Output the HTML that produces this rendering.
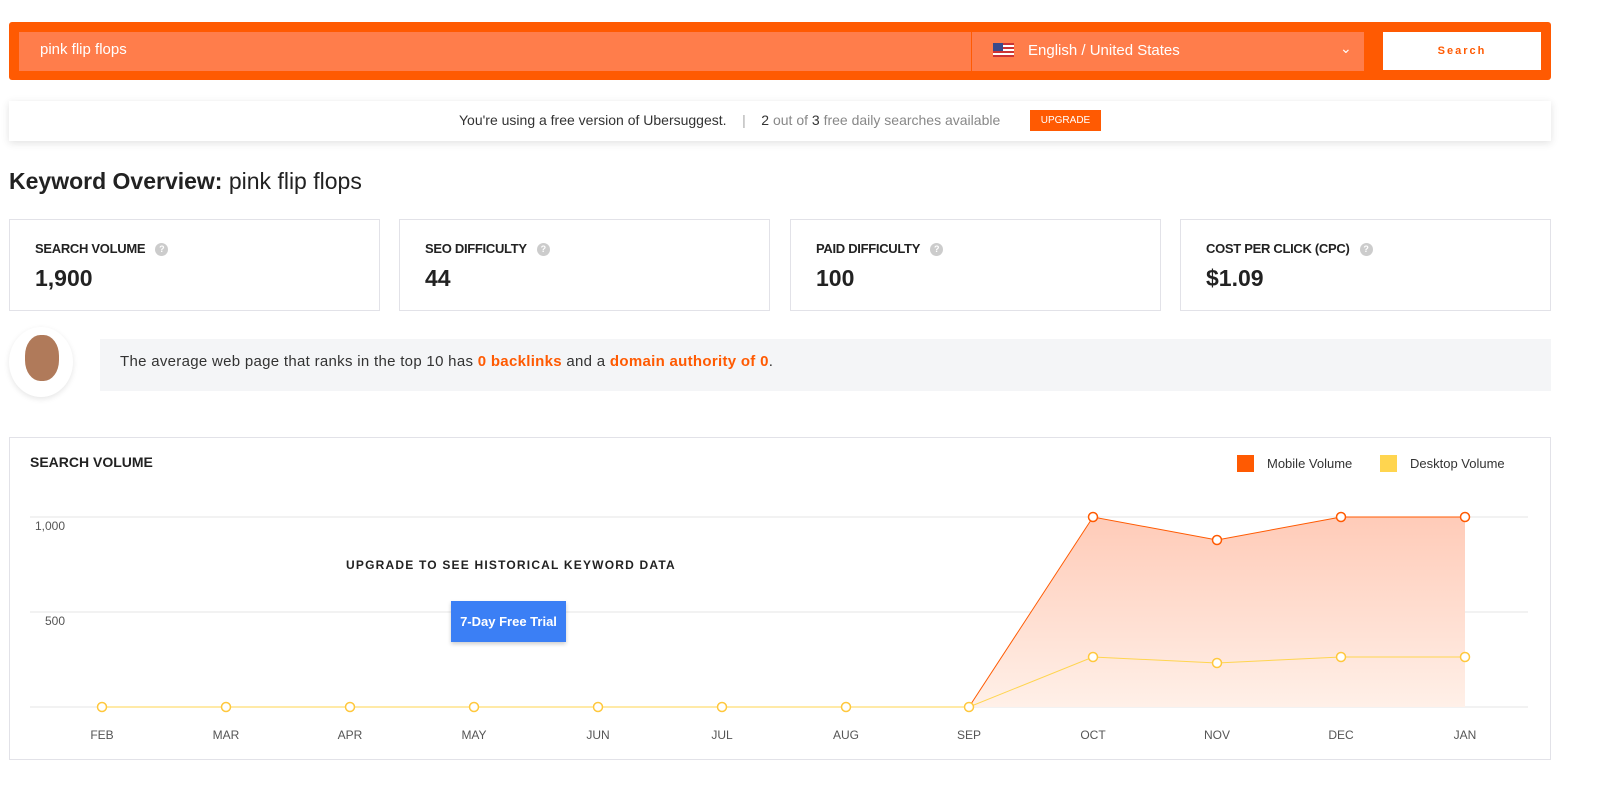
<!DOCTYPE html>
<html><head><meta charset="utf-8"><style>
*{box-sizing:border-box;margin:0;padding:0}
body{width:1598px;height:789px;background:#fff;font-family:"Liberation Sans",sans-serif;color:#222;position:relative;overflow:hidden}
.abs{position:absolute}
.card{position:absolute;top:219px;width:371px;height:92px;border:1px solid #e2e2e8;background:#fff}
.card .l{position:absolute;left:25px;top:21px;font-size:13px;font-weight:bold;letter-spacing:-0.3px}
.card .q{display:inline-block;width:13px;height:13px;border-radius:50%;background:#ccc;color:#fff;font-size:9px;text-align:center;line-height:13px;margin-left:10px;vertical-align:1px}
.card .v{position:absolute;left:25px;top:45px;font-size:23px;font-weight:bold}
.xl{position:absolute;top:728px;font-size:12px;color:#555;width:60px;text-align:center}
</style></head><body>
<div class="abs" style="left:9px;top:22px;width:1542px;height:58px;background:#ff5a02;border-radius:3px"></div>
<div class="abs" style="left:19px;top:32px;width:952px;height:39px;background:#ff7d4b"></div>
<div class="abs" style="left:40px;top:41px;color:#fff;font-size:15px">pink flip flops</div>
<div class="abs" style="left:972px;top:32px;width:392px;height:39px;background:#ff7d4b"></div>
<div class="abs" style="left:993px;top:43px;width:21px;height:14px;background:repeating-linear-gradient(#c33 0 2px,#fff 2px 4px)"><div style="width:10px;height:8px;background:#3a4a8a"></div></div>
<div class="abs" style="left:1028px;top:42px;color:#fff;font-size:15px">English / United States</div>
<div class="abs" style="left:1340px;top:40px;color:#fff;font-size:14px">⌄</div>
<div class="abs" style="left:1383px;top:32px;width:158px;height:38px;background:#fff;color:#ff5a02;font-size:11px;font-weight:bold;letter-spacing:2px;text-align:center;line-height:38px">Search</div>
<div class="abs" style="left:9px;top:101px;width:1542px;height:40px;background:#fff;box-shadow:0 2px 8px rgba(0,0,0,.12)"></div>
<div class="abs" style="left:459px;top:112px;font-size:14px;color:#333">You're using a free version of Ubersuggest.&nbsp;&nbsp;&nbsp;&nbsp;<span style="color:#aaa">|</span>&nbsp;&nbsp;&nbsp;&nbsp;2 <span style="color:#888">out of</span> 3 <span style="color:#888">free daily searches available</span></div>
<div class="abs" style="left:1030px;top:110px;width:71px;height:21px;background:#ff5a02;color:#fff;font-size:10px;text-align:center;line-height:21px">UPGRADE</div>
<div class="abs" style="left:9px;top:168px;font-size:23px"><b>Keyword Overview:</b> pink flip flops</div>
<div class="card" style="left:9px"><div class="l">SEARCH VOLUME<span class="q">?</span></div><div class="v">1,900</div></div>
<div class="card" style="left:399px"><div class="l">SEO DIFFICULTY<span class="q">?</span></div><div class="v">44</div></div>
<div class="card" style="left:790px"><div class="l">PAID DIFFICULTY<span class="q">?</span></div><div class="v">100</div></div>
<div class="card" style="left:1180px"><div class="l">COST PER CLICK (CPC)<span class="q">?</span></div><div class="v">$1.09</div></div>
<div class="abs" style="left:100px;top:339px;width:1451px;height:52px;background:#f4f5f7"></div>
<div class="abs" style="left:9px;top:327px;width:64px;height:70px;border-radius:50%;background:#fff;box-shadow:0 2px 6px rgba(0,0,0,.1)"><div style="margin:8px 0 0 16px;width:34px;height:46px;border-radius:45%;background:#b07a5a"></div></div>
<div class="abs" style="left:120px;top:353px;font-size:15px;color:#333;letter-spacing:0.3px">The average web page that ranks in the top 10 has <b style="color:#ff5a02">0 backlinks</b> and a <b style="color:#ff5a02">domain authority of 0</b>.</div>
<div class="abs" style="left:9px;top:437px;width:1542px;height:323px;border:1px solid #e2e2e8"></div>
<div class="abs" style="left:30px;top:454px;font-size:14px;font-weight:bold">SEARCH VOLUME</div>
<div class="abs" style="left:1237px;top:455px;width:17px;height:17px;background:#ff5a02"></div>
<div class="abs" style="left:1267px;top:456px;font-size:13px;color:#333">Mobile Volume</div>
<div class="abs" style="left:1380px;top:455px;width:17px;height:17px;background:#ffd54f"></div>
<div class="abs" style="left:1410px;top:456px;font-size:13px;color:#333">Desktop Volume</div>
<div class="abs" style="left:35px;top:519px;font-size:12px;color:#555">1,000</div>
<div class="abs" style="left:45px;top:614px;font-size:12px;color:#555">500</div>
<svg class="abs" style="left:0;top:0" width="1598" height="789">
<defs><linearGradient id="g" x1="0" y1="0" x2="0" y2="1"><stop offset="0" stop-color="#ffcbb8"/><stop offset="1" stop-color="#fff0e8"/></linearGradient></defs>
<line x1="30" y1="517" x2="1528" y2="517" stroke="#e5e5e5"/>
<line x1="30" y1="612" x2="1528" y2="612" stroke="#e5e5e5"/>
<line x1="30" y1="707" x2="1528" y2="707" stroke="#e5e5e5"/>
<polygon points="969,707 1093,517 1217,540 1341,517 1465,517 1465,707" fill="url(#g)"/>
<polyline points="969,707 1093,517 1217,540 1341,517 1465,517" fill="none" stroke="#ff5a02"/>
<polyline points="102,707 969,707 1093,657 1217,663 1341,657 1465,657" fill="none" stroke="#ffd54f"/>
<g fill="#fff" stroke="#ff5a02" stroke-width="1.5"><circle cx="1093" cy="517" r="4.5"/><circle cx="1217" cy="540" r="4.5"/><circle cx="1341" cy="517" r="4.5"/><circle cx="1465" cy="517" r="4.5"/></g>
<g fill="#fff" stroke="#ffc83d" stroke-width="1.5"><circle cx="102" cy="707" r="4.5"/><circle cx="226" cy="707" r="4.5"/><circle cx="350" cy="707" r="4.5"/><circle cx="474" cy="707" r="4.5"/><circle cx="598" cy="707" r="4.5"/><circle cx="722" cy="707" r="4.5"/><circle cx="846" cy="707" r="4.5"/><circle cx="969" cy="707" r="4.5"/><circle cx="1093" cy="657" r="4.5"/><circle cx="1217" cy="663" r="4.5"/><circle cx="1341" cy="657" r="4.5"/><circle cx="1465" cy="657" r="4.5"/></g>
</svg>
<div class="abs" style="left:346px;top:558px;font-size:12px;font-weight:bold;letter-spacing:1.2px">UPGRADE TO SEE HISTORICAL KEYWORD DATA</div>
<div class="abs" style="left:451px;top:601px;width:115px;height:41px;background:#3b7ff5;color:#fff;font-size:13px;font-weight:bold;text-align:center;line-height:41px;box-shadow:0 2px 4px rgba(0,0,0,.2)">7-Day Free Trial</div>
<div class="xl" style="left:72px">FEB</div><div class="xl" style="left:196px">MAR</div><div class="xl" style="left:320px">APR</div><div class="xl" style="left:444px">MAY</div><div class="xl" style="left:568px">JUN</div><div class="xl" style="left:692px">JUL</div><div class="xl" style="left:816px">AUG</div><div class="xl" style="left:939px">SEP</div><div class="xl" style="left:1063px">OCT</div><div class="xl" style="left:1187px">NOV</div><div class="xl" style="left:1311px">DEC</div><div class="xl" style="left:1435px">JAN</div>
</body></html>
